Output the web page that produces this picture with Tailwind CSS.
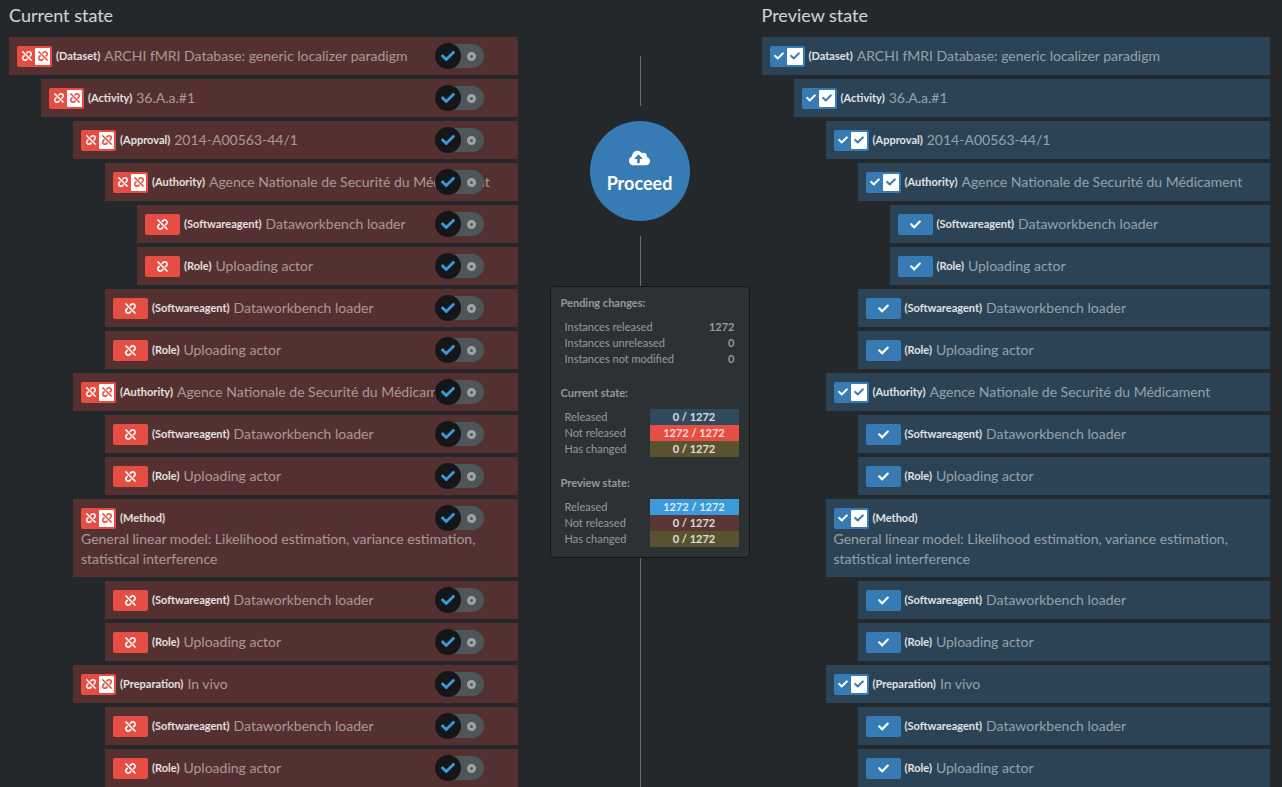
<!DOCTYPE html>
<html lang="en">
<head>
<meta charset="utf-8">
<meta name="viewport" content="width=device-width, initial-scale=1">
<title>Release instances</title>
<script src="https://cdn.jsdelivr.net/npm/@tailwindcss/browser@4"></script>
</head>
<body class="bg-[#24282a] font-[Lato,sans-serif] text-white">

<svg class="hidden" aria-hidden="true">
  <symbol id="unlink" viewBox="0 0 512 512"><path d="M304.083 405.907c4.686 4.686 4.686 12.284 0 16.971l-44.674 44.674c-59.263 59.262-155.693 59.266-214.961 0-59.264-59.265-59.264-155.696 0-214.96l44.675-44.675c4.686-4.686 12.284-4.686 16.971 0l39.598 39.598c4.686 4.686 4.686 12.284 0 16.971l-44.675 44.674c-28.072 28.073-28.072 73.75 0 101.823 28.072 28.072 73.75 28.073 101.824 0l44.674-44.674c4.686-4.686 12.284-4.686 16.971 0l39.597 39.598zm-56.568-260.216c4.686 4.686 12.284 4.686 16.971 0l44.674-44.674c28.072-28.075 73.75-28.073 101.824 0 28.072 28.073 28.072 73.75 0 101.823l-44.675 44.674c-4.686 4.686-4.686 12.284 0 16.971l39.598 39.598c4.686 4.686 12.284 4.686 16.971 0l44.675-44.675c59.263-59.265 59.263-155.695 0-214.96-59.266-59.264-155.695-59.264-214.961 0l-44.674 44.674c-4.686 4.686-4.686 12.284 0 16.971l39.597 39.598zm234.828 359.28l22.627-22.627c9.373-9.373 9.373-24.569 0-33.941L63.598 7.029c-9.373-9.373-24.569-9.373-33.941 0L7.029 29.657c-9.373 9.373-9.373 24.569 0 33.941l441.373 441.373c9.373 9.372 24.569 9.372 33.941 0z"/></symbol>
  <symbol id="check" viewBox="0 0 512 512"><path d="M173.898 439.404l-166.4-166.4c-9.997-9.997-9.997-26.206 0-36.204l36.203-36.204c9.997-9.998 26.207-9.998 36.204 0L192 312.69 432.095 72.596c9.997-9.997 26.207-9.997 36.204 0l36.203 36.204c9.997 9.997 9.997 26.206 0 36.204l-294.4 294.401c-9.998 9.997-26.207 9.997-36.204-.001z"/></symbol>
  <symbol id="cloud-upload" viewBox="0 0 640 512"><path d="M537.6 226.6c4.1-10.7 6.4-22.4 6.4-34.6 0-53-43-96-96-96-19.7 0-38.1 6-53.3 16.2C367 64.2 315.3 32 256 32c-88.4 0-160 71.6-160 160 0 2.7.1 5.4.2 8.1C40.2 219.8 0 273.2 0 336c0 79.5 64.5 144 144 144h368c70.7 0 128-57.3 128-128 0-61.9-44-113.6-102.4-125.4zM393.4 288H328v112c0 8.8-7.2 16-16 16h-48c-8.8 0-16-7.2-16-16V288h-65.4c-14.3 0-21.4-17.2-11.3-27.4l105.4-105.4c6.2-6.2 16.4-6.2 22.6 0l105.4 105.4c10.1 10.2 2.9 27.4-11.3 27.4z"/></symbol>
</svg>

<main class="grid min-h-screen grid-cols-[minmax(0,1fr)_244px_minmax(0,1fr)] pr-3 pl-[9px]">
  <section class="pt-[3px]">
    <h2 class="mb-2.5 text-lg leading-6 text-white/80">Current state</h2>
    <div id="current"></div>
  </section>

  <section class="flex flex-col items-center pt-14">
    <div class="ml-px h-[50px] w-px bg-[#6c6f70]"></div>
    <button type="button" class="my-[15px] flex size-[100px] flex-col items-center justify-center rounded-full bg-[#377bb5] pt-0.5 text-lg leading-6 font-bold">
      <svg class="h-[18px] w-[21px] fill-current" aria-hidden="true"><use href="#cloud-upload"/></svg>
      <span class="mt-1">Proceed</span>
    </button>
    <div class="ml-px h-[50px] w-px bg-[#6c6f70]"></div>

    <div class="ml-5 w-[200px] rounded border border-[#141617] bg-[#2c3133] px-2.5 pt-2 pb-2.5 text-[11px] leading-4 text-white/50">
      <h3 class="mb-2 font-bold">Pending changes:</h3>
      <table class="mb-[18px] w-full">
        <tr><th scope="row" class="pl-1 text-left font-normal">Instances released</th><td class="pr-1 text-right font-bold">1272</td></tr>
        <tr><th scope="row" class="pl-1 text-left font-normal">Instances unreleased</th><td class="pr-1 text-right font-bold">0</td></tr>
        <tr><th scope="row" class="pl-1 text-left font-normal">Instances not modified</th><td class="pr-1 text-right font-bold">0</td></tr>
      </table>
      <h3 class="mb-2 font-bold">Current state:</h3>
      <table class="mb-[18px] w-full table-fixed">
        <tr><th scope="row" class="pl-1 text-left font-normal">Released</th><td class="bg-[#2f4a5d] text-center font-bold text-white/80">0 / 1272</td></tr>
        <tr><th scope="row" class="pl-1 text-left font-normal">Not released</th><td class="bg-[#e64d43] text-center font-bold text-white/80">1272 / 1272</td></tr>
        <tr><th scope="row" class="pl-1 text-left font-normal">Has changed</th><td class="bg-[#5a532f] text-center font-bold text-white/80">0 / 1272</td></tr>
      </table>
      <h3 class="mb-2 font-bold">Preview state:</h3>
      <table class="w-full table-fixed">
        <tr><th scope="row" class="pl-1 text-left font-normal">Released</th><td class="bg-[#3c99da] text-center font-bold text-white/80">1272 / 1272</td></tr>
        <tr><th scope="row" class="pl-1 text-left font-normal">Not released</th><td class="bg-[#5a3635] text-center font-bold text-white/80">0 / 1272</td></tr>
        <tr><th scope="row" class="pl-1 text-left font-normal">Has changed</th><td class="bg-[#5a532f] text-center font-bold text-white/80">0 / 1272</td></tr>
      </table>
    </div>
    <div class="ml-px w-px flex-1 bg-[#6c6f70]"></div>
  </section>

  <section class="pt-[3px]">
    <h2 class="mb-2.5 text-lg leading-6 text-white/80">Preview state</h2>
    <div id="preview"></div>
  </section>
</main>

<script>
const agents = () => [
  { type: 'Softwareagent', name: 'Dataworkbench loader' },
  { type: 'Role', name: 'Uploading actor' },
];
const tree = [{
  type: 'Dataset', name: 'ARCHI fMRI Database: generic localizer paradigm', children: [{
    type: 'Activity', name: '36.A.a.#1', children: [
      { type: 'Approval', name: '2014-A00563-44/1', children: [
        { type: 'Authority', name: 'Agence Nationale de Securité du Médicament', children: agents() },
        ...agents(),
      ] },
      { type: 'Authority', name: 'Agence Nationale de Securité du Médicament', children: agents() },
      { type: 'Method', name: 'General linear model: Likelihood estimation, variance estimation, statistical interference', children: agents() },
      { type: 'Preparation', name: 'In vivo', children: agents() },
    ],
  }],
}];

const icon = (id, cls) => `<svg class="${cls}" aria-hidden="true"><use href="#${id}"/></svg>`;

const looks = {
  current: {
    icon: 'unlink', row: 'bg-[#553030]', badge: 'gap-[3px] bg-[#e64d43]',
    box: 'flex h-[17px] w-[15px] items-center justify-center rounded-[1px] bg-white text-[#e64d43]',
  },
  preview: {
    icon: 'check', row: 'bg-[#2b4355]', badge: 'gap-[3px] bg-[#377bb5]',
    box: 'flex h-[17px] w-4 items-center justify-center rounded-[1px] bg-white text-[#377bb5]',
  },
};

const badge = (node, look) => node.children
  ? `<span class="flex h-[21px] w-[35px] items-center justify-end rounded-xs pr-0.5 ${look.badge}">${icon(look.icon, 'size-[10px] fill-current')}<span class="${look.box}">${icon(look.icon, 'size-[10px] fill-current')}</span></span>`
  : `<span class="flex h-[21px] w-[35px] items-center justify-center rounded-xs ${look.badge}">${icon(look.icon, 'size-[11px] fill-current')}</span>`;

const toggle = node => `
  <button type="button" role="switch" aria-checked="true" aria-label="Release ${node.type} ${node.name}"
    class="absolute top-[7px] right-[34px] flex h-6 w-12 items-center justify-end rounded-full bg-[#4d5658] pr-2">
    <span class="absolute -top-px -left-px flex size-[26px] items-center justify-center rounded-full bg-[#141617]">${icon('check', 'size-[14px] fill-[#3c99da]')}</span>
    <span class="size-[9px] rounded-full border-3 border-[#a0a3a4]"></span>
  </button>`;

const list = (nodes, side, nested) => `<ul class="${nested ? 'mt-1 flex flex-col gap-1 pl-8' : 'flex flex-col gap-1'}">${nodes.map(node => `
  <li>
    <div class="relative flex flex-wrap items-center p-2 ${looks[side].row}">
      <span class="flex h-[22px] items-center gap-1">${badge(node, looks[side])}<span class="mr-1 text-[11px] leading-4 font-bold text-white/85">(${node.type})</span></span>
      <span class="text-sm leading-5 text-white/50">${node.name}</span>
      ${side === 'current' ? toggle(node) : ''}
    </div>
    ${node.children ? list(node.children, side, true) : ''}
  </li>`).join('')}</ul>`;

for (const side of ['current', 'preview']) {
  document.getElementById(side).innerHTML = list(tree, side, false);
}
</script>
</body>
</html>
